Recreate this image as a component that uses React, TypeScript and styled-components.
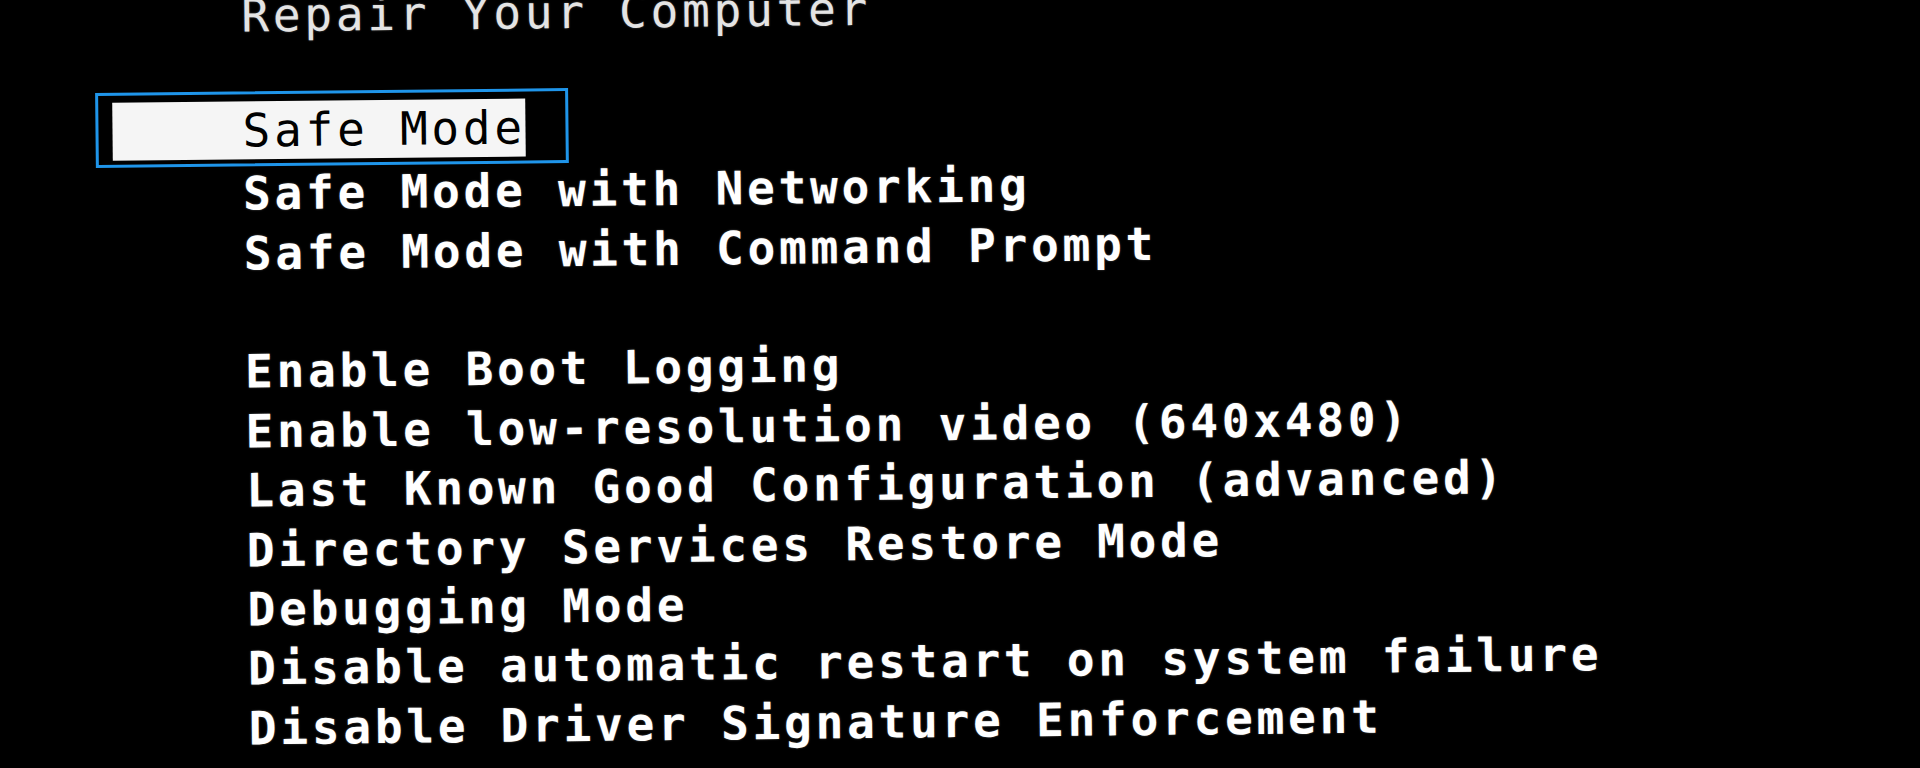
import styled, { createGlobalStyle } from "styled-components";

const GlobalStyle = createGlobalStyle`
  html, body {
    margin: 0;
    padding: 0;
    background: #000;
    overflow: hidden;
  }
`;

const Screen = styled.div`
  width: 1920px;
  height: 768px;
  background: #000;
  overflow: hidden;
`;

const Menu = styled.div`
  display: flex;
  flex-direction: column;
  margin-top: -11px;
  transform: rotate(-0.6deg);
  transform-origin: 0 0;
  font-family: "DejaVu Sans Mono", "Liberation Mono", monospace;
  font-size: 46px;
  letter-spacing: 3.8px;
  white-space: pre;
`;

const Row = styled.div<{ $dim?: boolean }>`
  display: flex;
  height: 59.4px;
  line-height: 59.4px;
  padding-left: 241px;
  color: ${({ $dim }) => ($dim ? "#e4e4e4" : "#ffffff")};
  font-weight: ${({ $dim }) => ($dim ? 400 : 700)};
  text-shadow: 0 0 2px rgba(255, 255, 255, 0.35);
`;

const Gap = styled.div`
  height: 59.4px;
`;

const SelectedRow = styled(Row)`
  padding-left: 94px;
`;

const FocusFrame = styled.div`
  margin-top: -14px;
  border: 3px solid #1f95ea;
  padding: 7px 40px 4px 14px;
  box-sizing: content-box;
  height: 58px;
`;

const Highlight = styled.div`
  height: 58px;
  line-height: 58px;
  padding-left: 130px;
  background: #f5f5f5;
  color: #000;
  text-shadow: none;
  font-weight: 400;
`;

type Item = { label: string; gapBefore?: boolean };

const items: Item[] = [
  { label: "Safe Mode with Networking" },
  { label: "Safe Mode with Command Prompt" },
  { label: "Enable Boot Logging", gapBefore: true },
  { label: "Enable low-resolution video (640x480)" },
  { label: "Last Known Good Configuration (advanced)" },
  { label: "Directory Services Restore Mode" },
  { label: "Debugging Mode" },
  { label: "Disable automatic restart on system failure" },
  { label: "Disable Driver Signature Enforcement" },
];

export default function App() {
  return (
    <Screen>
      <GlobalStyle />
      <Menu>
        <Row $dim>Repair Your Computer</Row>
        <Gap />
        <SelectedRow>
          <FocusFrame>
            <Highlight>Safe Mode</Highlight>
          </FocusFrame>
        </SelectedRow>
        {items.map((item) => (
          <div key={item.label}>
            {item.gapBefore && <Gap />}
            <Row>{item.label}</Row>
          </div>
        ))}
      </Menu>
    </Screen>
  );
}
